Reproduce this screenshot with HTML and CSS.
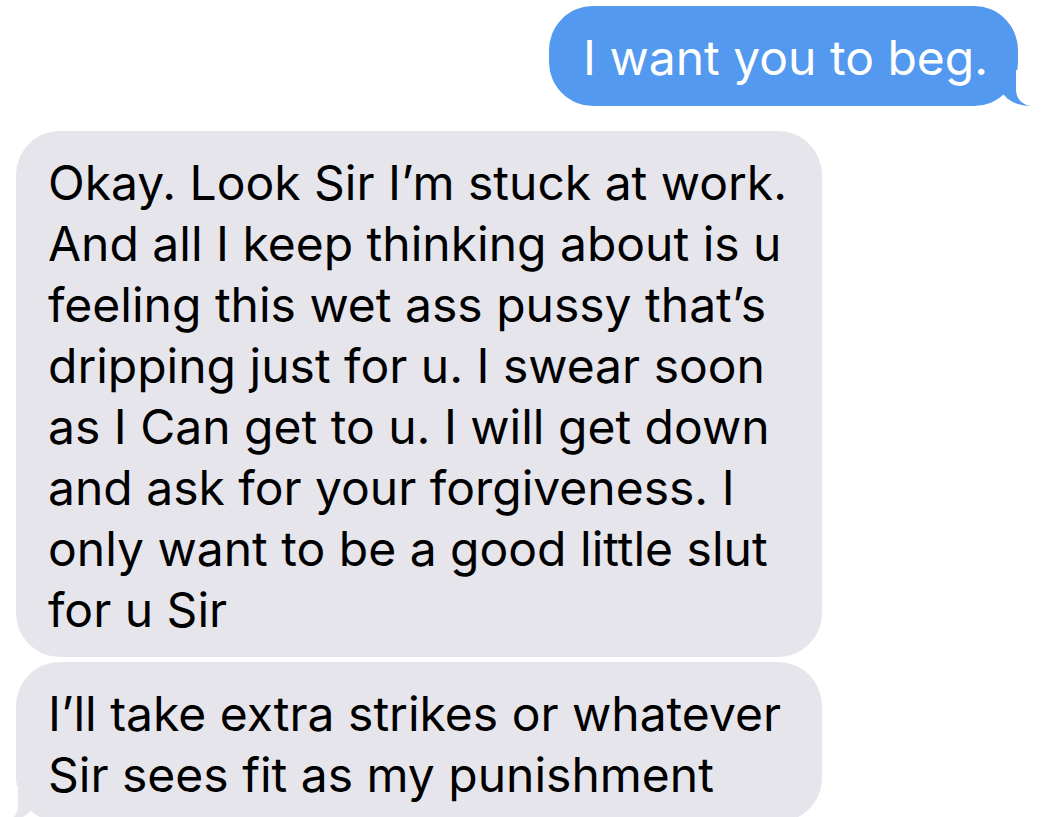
FILE: index.html
```html
<!DOCTYPE html>
<html lang="en">
<head>
    <meta charset="UTF-8">
    <meta name="viewport" content="width=device-width, initial-scale=1.0">
    <title>Messages</title>
    <link rel="stylesheet" href="styles.css">
</head>
<body>
    <div class="thread">
        <div class="bubble sent">I want you to beg.</div>

        <div class="bubble received first">
            Okay. Look Sir I’m stuck at work.<br>
            And all I keep thinking about is u<br>
            feeling this wet ass pussy that’s<br>
            dripping just for u. I swear soon<br>
            as I Can get to u. I will get down<br>
            and ask for your forgiveness. I<br>
            only want to be a good little slut<br>
            for u Sir
        </div>

        <div class="bubble received last">
            I’ll take extra strikes or whatever<br>
            Sir sees fit as my punishment
        </div>
    </div>
</body>
</html>
```

FILE: styles.css
```css
html, body {
    margin: 0;
    background: #fff;
    overflow: hidden;
}
.thread {
    display: flex;
    flex-direction: column;
    padding: 6px 0 0 16px;
    font-family: Inter, "Noto Sans", sans-serif;
    font-size: 48px;
    line-height: 61px;
}
.bubble {
    position: relative;
    border-radius: 44px;
    white-space: nowrap;
}
.sent {
    align-self: flex-end;
    margin-right: 28px;
    width: 469px;
    box-sizing: border-box;
    height: 100px;
    padding: 21px 0 0 34px;
    background: #5299ef;
    color: #fff;
}
.received {
    width: 806px;
    box-sizing: border-box;
    padding: 21px 32px 17px 32px;
    background: #e6e5eb;
    color: #000;
}
.first {
    margin-top: 25px;
}
.last {
    margin-top: 5px;
}
/* tails */
.sent::before,
.last::before {
    content: "";
    position: absolute;
    bottom: 0;
    width: 40px;
    height: 36px;
    z-index: 0;
}
.sent::after,
.last::after {
    content: "";
    position: absolute;
    bottom: 0;
    width: 50px;
    height: 36px;
    background: #fff;
    z-index: 1;
}
.sent::before {
    right: -20px;
    background: #5299ef;
    border-bottom-left-radius: 32px 26px;
}
.sent::after {
    right: -48px;
    border-bottom-left-radius: 16px;
}
.last::before {
    left: -20px;
    background: #e6e5eb;
    border-bottom-right-radius: 32px 26px;
}
.last::after {
    left: -48px;
    border-bottom-right-radius: 16px;
}
```
